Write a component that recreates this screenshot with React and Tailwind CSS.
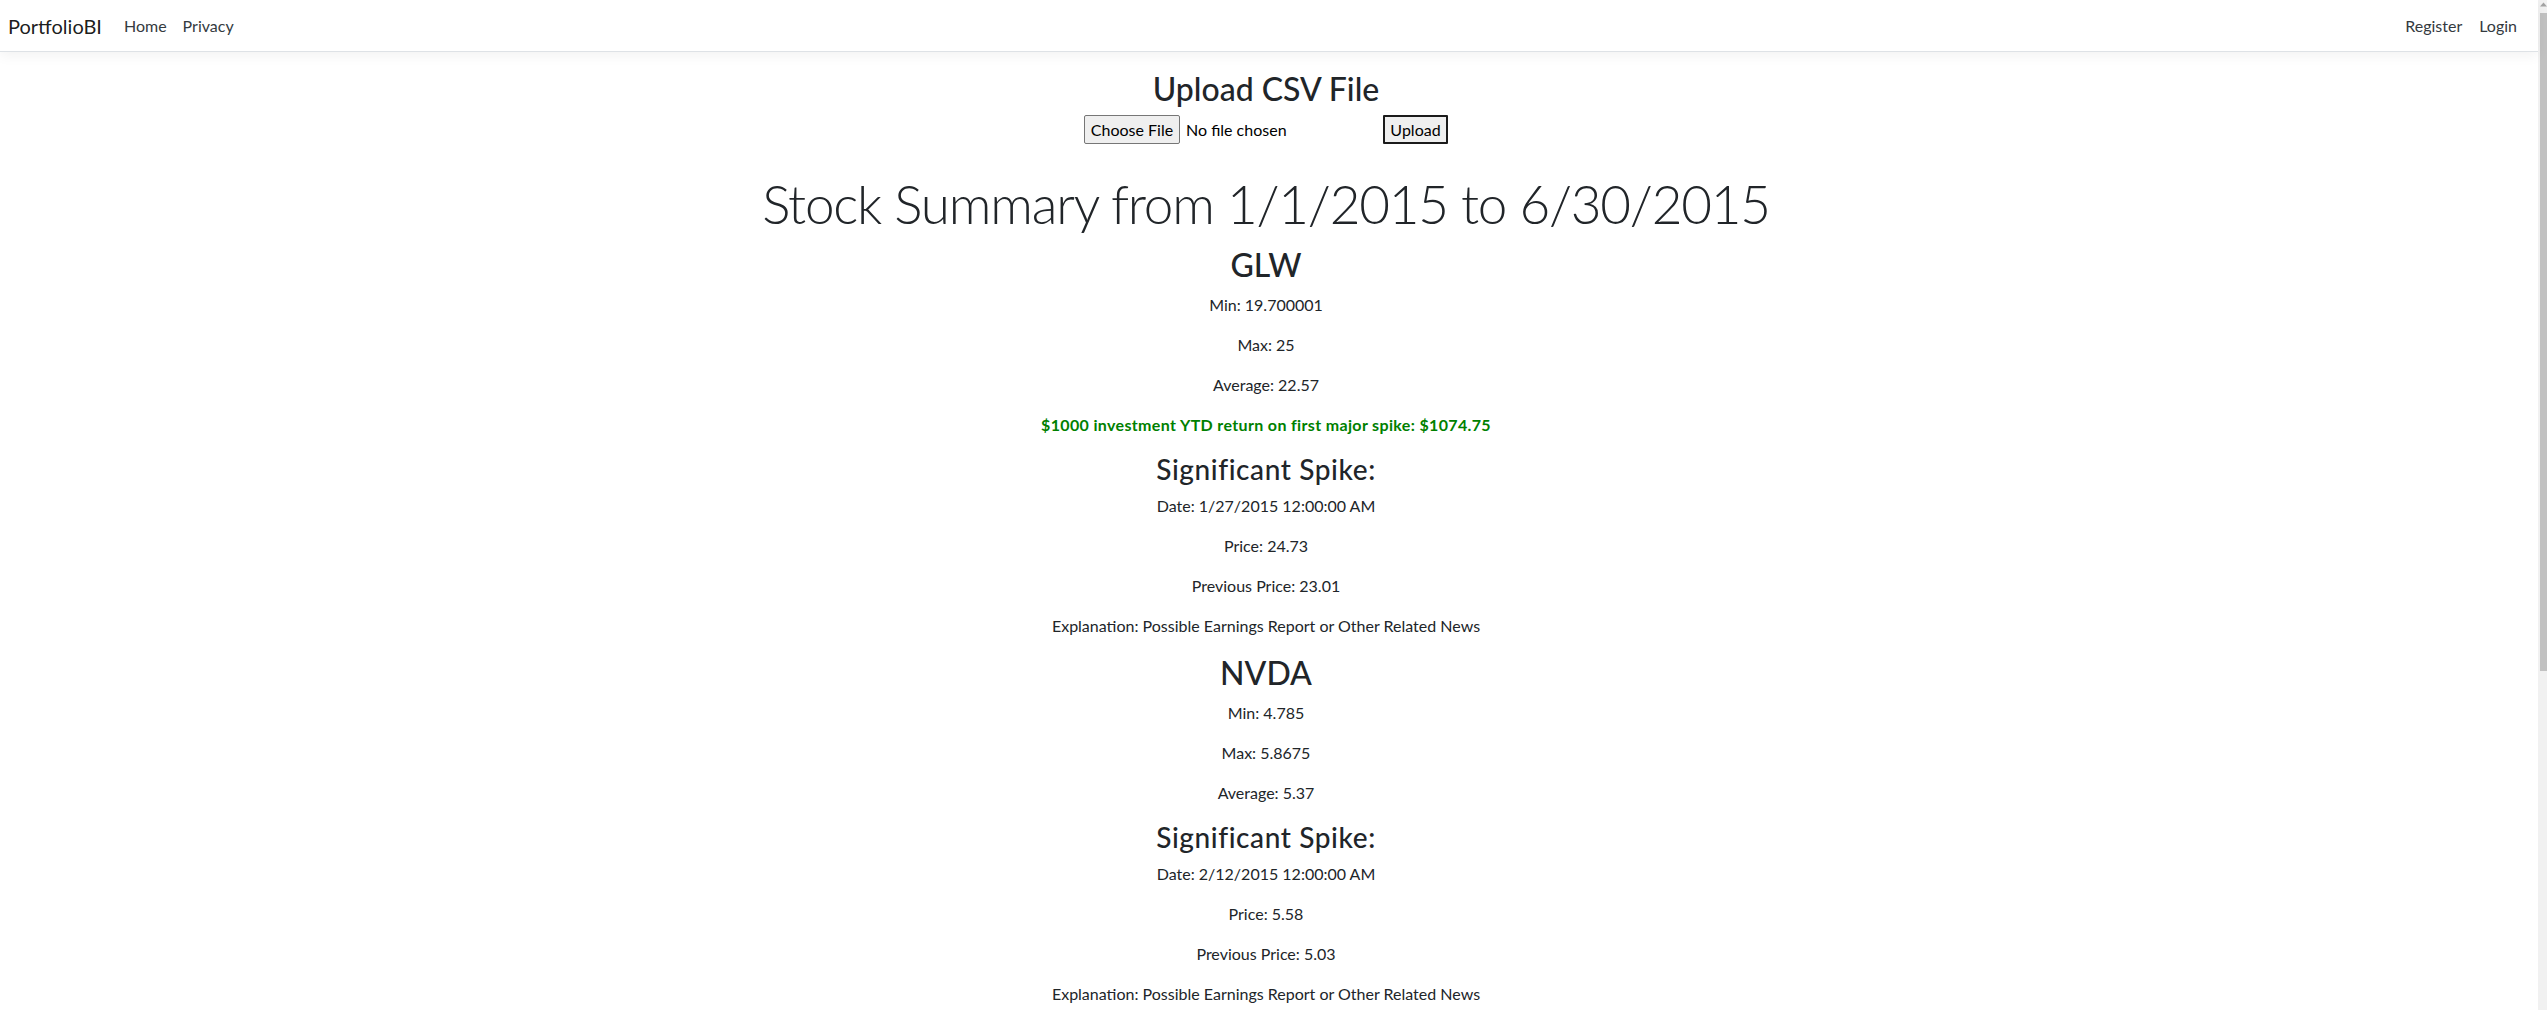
import React from "react";

const FONT = { fontFamily: '"Lato", "Open Sans", "Liberation Sans", sans-serif' };

function Stat({ children, green }) {
  return (
    <p
      className={
        "m-0 mb-4 text-[16px] leading-6 " +
        (green ? "font-bold tracking-[0.35px] text-[#008000]" : "text-[#212529]")
      }
    >
      {children}
    </p>
  );
}

function H2({ children }) {
  return <h2 className="m-0 mb-2 text-[32px] font-medium leading-[1.2] text-[#212529]">{children}</h2>;
}

function H3({ children }) {
  return (
    <h3 className="m-0 mb-2 text-[28px] font-medium leading-[1.2] tracking-[0.6px] text-[#212529]">
      {children}
    </h3>
  );
}

function StockBlock({ s }) {
  return (
    <div>
      <H2>{s.symbol}</H2>
      <Stat>Min: {s.min}</Stat>
      <Stat>Max: {s.max}</Stat>
      <Stat>Average: {s.avg}</Stat>
      {s.investment && <Stat green>$1000 investment YTD return on first major spike: {s.investment}</Stat>}
      <H3>Significant Spike:</H3>
      <Stat>Date: {s.date}</Stat>
      <Stat>Price: {s.price}</Stat>
      <Stat>Previous Price: {s.prev}</Stat>
      <Stat>Explanation: Possible Earnings Report or Other Related News</Stat>
    </div>
  );
}

const stocks = [
  {
    symbol: "GLW",
    min: "19.700001",
    max: "25",
    avg: "22.57",
    investment: "$1074.75",
    date: "1/27/2015 12:00:00 AM",
    price: "24.73",
    prev: "23.01",
  },
  {
    symbol: "NVDA",
    min: "4.785",
    max: "5.8675",
    avg: "5.37",
    investment: null,
    date: "2/12/2015 12:00:00 AM",
    price: "5.58",
    prev: "5.03",
  },
];

export default function App() {
  return (
    <div className="flex h-[1010px] w-full overflow-hidden bg-white" style={FONT}>
      <div className="flex min-w-0 flex-1 flex-col">
        <nav className="relative z-10 flex h-[52px] shrink-0 items-center justify-between border-b border-[#dee2e6] bg-white pl-2 pr-[21px] shadow-[0_4px_12px_rgba(0,0,0,0.05)]">
          <div className="flex items-center">
            <span className="text-[20px] leading-[30px] text-[rgba(0,0,0,0.9)]">PortfolioBI</span>
            <div className="ml-[22px] flex items-center gap-[16px] text-[16px] leading-6 text-[#343a40]">
              <span>Home</span>
              <span>Privacy</span>
            </div>
          </div>
          <div className="flex items-center gap-[17px] text-[16px] leading-6 text-[#343a40]">
            <span>Register</span>
            <span>Login</span>
          </div>
        </nav>

        <main className="flex flex-col items-center pr-[6px] pt-[18px] text-center">
          <H2>Upload CSV File</H2>
          <div className="-mt-[1px] flex h-[29px] items-center">
            <div className="flex w-[296px] items-center">
              <span className="flex h-[29px] w-[96px] items-center justify-center rounded-[2px] border border-[#767676] bg-[#efefef] text-[16px] text-black">
                Choose File
              </span>
              <span className="ml-[6px] text-[16px] text-black">No file chosen</span>
            </div>
            <span className="ml-[3px] flex h-[29px] w-[65px] items-center justify-center rounded-[1px] border-2 border-[#1b1b1b] bg-[#efefef] text-[16px] text-black">
              Upload
            </span>
          </div>

          <h1 className="m-0 mb-[9px] mt-[26px] h-[67px] text-[53px] font-light leading-[67px] tracking-[-1.2px] text-[#212529]">
            Stock Summary from 1/1/2015 to 6/30/2015
          </h1>

          {stocks.map((s) => (
            <StockBlock key={s.symbol} s={s} />
          ))}
        </main>
      </div>

      <div className="flex w-[9px] shrink-0 flex-col bg-[#f1f1f1]">
        <div className="flex h-[13px] items-start justify-end pt-[2px]">
          <svg width="7" height="5" viewBox="0 0 7 5">
            <path d="M3.5 0.5 L7 4.5 L0 4.5 Z" fill="#a3a3a3" />
          </svg>
        </div>
        <div className="ml-[2px] h-[658px] bg-[#c1c1c1]" />
      </div>
    </div>
  );
}
